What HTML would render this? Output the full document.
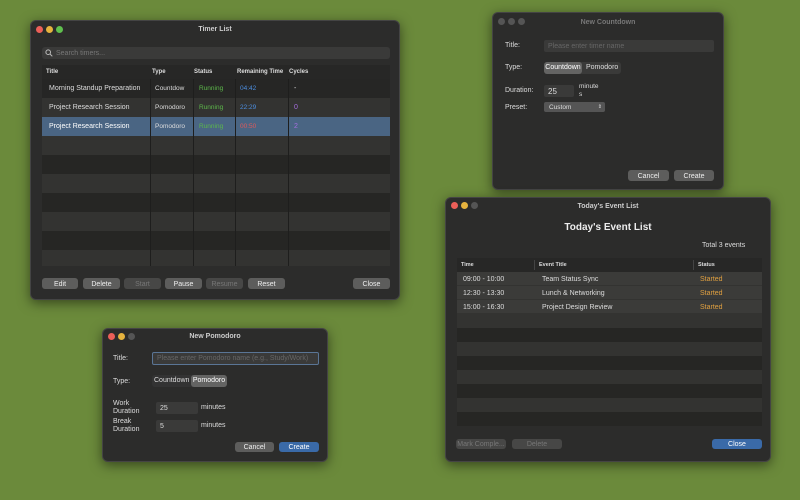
<!DOCTYPE html>
<html><head><meta charset="utf-8"><style>
*{box-sizing:border-box;margin:0;padding:0}
body{width:800px;height:500px;background:#6b8a3b;font-family:"Liberation Sans",sans-serif;color:#ddd;position:relative;overflow:hidden;font-size:7px}
.a{position:absolute}
.win{position:absolute;background:#2c2c2b;border-radius:6px;box-shadow:0 3px 12px rgba(0,0,0,.5);border:1px solid #444;overflow:hidden}
.tb{position:absolute;left:0;right:0;top:0;display:flex;align-items:center;justify-content:center;font-weight:bold;color:#ccc;font-size:7px;padding-top:1px}
.d{position:absolute;width:7px;height:7px;border-radius:50%}
.btn{position:absolute;background:#5d5d5c;border-radius:3px;color:#eee;display:flex;align-items:center;justify-content:center;font-size:7px;padding-top:1px}
.dis{background:#474746;color:#777}
.blue{background:#3a6aa8;color:#fff}
.fld{position:absolute;background:#3a3a39;border-radius:2px;color:#ddd;font-size:7px;padding-left:4px;display:flex;align-items:center}
.col{position:absolute;top:0;bottom:0;width:1px;background:#1e1e1d}
</style></head><body>

<!-- Timer List -->
<div class="win" style="left:30px;top:20px;width:370px;height:280px">
<div class="tb" style="height:16px">Timer List</div>
<div class="d" style="left:5px;top:5px;background:#ec5f58"></div>
<div class="d" style="left:15px;top:5px;background:#e6b33e"></div>
<div class="d" style="left:25px;top:5px;background:#5fc04e"></div>
<div class="a" style="left:11px;top:26px;width:348px;height:12px;background:#3a3a39;border-radius:3px;color:#777;line-height:13px;padding-left:14px">Search timers...</div>
<svg class="a" style="left:14px;top:28px" width="8" height="8"><circle cx="3.2" cy="3.2" r="2.3" stroke="#bbb" fill="none" stroke-width="1"/><path d="M5 5L7.3 7.3" stroke="#bbb" stroke-width="1"/></svg>
<div class="a" style="left:11px;top:44px;width:348px;height:201px;background:#333331">
 <div class="a" style="left:0;top:0;width:348px;height:14px;background:#272726"></div>
 <div class="a" style="left:0;top:14px;width:348px;height:19px;background:#262625"></div>
 <div class="a" style="left:0;top:52px;width:348px;height:19px;background:#4a6583"></div>
 <div class="a" style="left:0;top:90px;width:348px;height:19px;background:#262624"></div>
 <div class="a" style="left:0;top:128px;width:348px;height:19px;background:#262624"></div>
 <div class="a" style="left:0;top:166px;width:348px;height:19px;background:#262624"></div>
 <div class="col" style="left:108px;top:14px"></div><div class="col" style="left:151px;top:14px"></div><div class="col" style="left:193px;top:14px"></div><div class="col" style="left:246px;top:14px"></div>
 <div class="a" style="left:4px;top:4px;font-weight:bold;font-size:6px">Title</div>
 <div class="a" style="left:110px;top:4px;font-weight:bold;font-size:6px">Type</div>
 <div class="a" style="left:152px;top:4px;font-weight:bold;font-size:6px">Status</div>
 <div class="a" style="left:195px;top:4px;font-weight:bold;font-size:6px">Remaining Time</div>
 <div class="a" style="left:247px;top:4px;font-weight:bold;font-size:6px">Cycles</div>
 <div class="a" style="left:7px;top:20px">Morning Standup Preparation</div><div class="a" style="left:113px;top:20px;font-size:6.5px">Countdow</div><div class="a" style="left:157px;top:20px;color:#5cb84a;font-size:6.5px">Running</div><div class="a" style="left:198px;top:20px;color:#4c8ee0;font-size:6.5px">04:42</div><div class="a" style="left:252px;top:20px">-</div>
 <div class="a" style="left:7px;top:39px">Project Research Session</div><div class="a" style="left:113px;top:39px;font-size:6.5px">Pomodoro</div><div class="a" style="left:157px;top:39px;color:#5cb84a;font-size:6.5px">Running</div><div class="a" style="left:198px;top:39px;color:#4c8ee0;font-size:6.5px">22:29</div><div class="a" style="left:252px;top:39px;color:#a66ee0">0</div>
 <div class="a" style="left:7px;top:58px;color:#fff">Project Research Session</div><div class="a" style="left:113px;top:58px;font-size:6.5px">Pomodoro</div><div class="a" style="left:157px;top:58px;color:#5cb84a;font-size:6.5px">Running</div><div class="a" style="left:198px;top:58px;color:#e05a5a;font-size:6.5px">00:50</div><div class="a" style="left:252px;top:58px;color:#a66ee0">2</div>
</div>
<div class="btn" style="left:11px;top:257px;width:36px;height:11px">Edit</div>
<div class="btn" style="left:52px;top:257px;width:37px;height:11px">Delete</div>
<div class="btn dis" style="left:93px;top:257px;width:37px;height:11px">Start</div>
<div class="btn" style="left:134px;top:257px;width:37px;height:11px">Pause</div>
<div class="btn dis" style="left:175px;top:257px;width:37px;height:11px">Resume</div>
<div class="btn" style="left:217px;top:257px;width:37px;height:11px">Reset</div>
<div class="btn" style="left:322px;top:257px;width:37px;height:11px">Close</div>
</div>

<!-- New Countdown -->
<div class="win" style="left:492px;top:12px;width:232px;height:178px">
<div class="tb" style="height:18px;color:#777">New Countdown</div>
<div class="d" style="left:5px;top:5px;background:#555"></div><div class="d" style="left:15px;top:5px;background:#555"></div><div class="d" style="left:25px;top:5px;background:#555"></div>
<div class="a" style="left:12px;top:29px">Title:</div>
<div class="fld" style="left:51px;top:27px;width:170px;height:12px;color:#666">Please enter timer name</div>
<div class="a" style="left:12px;top:51px">Type:</div>
<div class="a" style="left:51px;top:49px;width:77px;height:12px;background:#3a3a39;border-radius:3px"></div>
<div class="a" style="left:51px;top:49px;width:38px;height:12px;background:#646463;border-radius:3px;line-height:12px;text-align:center;color:#fff">Countdown</div>
<div class="a" style="left:93px;top:51px">Pomodoro</div>
<div class="a" style="left:12px;top:74px">Duration:</div>
<div class="fld" style="left:51px;top:72px;width:30px;height:12px;font-size:8px">25</div>
<div class="a" style="left:86px;top:70px;font-size:6.5px;line-height:8px">minute<br>s</div>
<div class="a" style="left:12px;top:91px">Preset:</div>
<div class="fld" style="left:51px;top:89px;width:61px;height:10px;background:#555;font-size:6.5px;padding-left:5px">Custom<span style="position:absolute;right:3px;font-size:5px">⇕</span></div>
<div class="btn" style="left:135px;top:157px;width:41px;height:11px">Cancel</div>
<div class="btn" style="left:181px;top:157px;width:40px;height:11px">Create</div>
</div>

<!-- New Pomodoro -->
<div class="win" style="left:102px;top:328px;width:226px;height:134px">
<div class="tb" style="height:14px">New Pomodoro</div>
<div class="d" style="left:5px;top:4px;background:#ec5f58"></div><div class="d" style="left:15px;top:4px;background:#e6b33e"></div><div class="d" style="left:25px;top:4px;background:#555"></div>
<div class="a" style="left:10px;top:26px">Title:</div>
<div class="fld" style="left:49px;top:23px;width:167px;height:13px;color:#666;border:1px solid #5a7595">Please enter Pomodoro name (e.g., Study/Work)</div>
<div class="a" style="left:10px;top:49px">Type:</div>
<div class="a" style="left:49px;top:46px;width:75px;height:12px;background:#333;border-radius:3px"></div>
<div class="a" style="left:51px;top:48px">Countdown</div>
<div class="a" style="left:88px;top:46px;width:36px;height:12px;background:#646463;border-radius:3px;line-height:12px;text-align:center;color:#fff">Pomodoro</div>
<div class="a" style="left:10px;top:71px;line-height:8px">Work<br>Duration</div>
<div class="fld" style="left:53px;top:73px;width:42px;height:12px">25</div>
<div class="a" style="left:98px;top:75px">minutes</div>
<div class="a" style="left:10px;top:89px;line-height:8px">Break<br>Duration</div>
<div class="fld" style="left:53px;top:91px;width:42px;height:12px">5</div>
<div class="a" style="left:98px;top:93px">minutes</div>
<div class="btn" style="left:132px;top:113px;width:39px;height:10px">Cancel</div>
<div class="btn blue" style="left:176px;top:113px;width:40px;height:10px">Create</div>
</div>

<!-- Event List -->
<div class="win" style="left:445px;top:197px;width:326px;height:265px">
<div class="tb" style="height:15px">Today's Event List</div>
<div class="d" style="left:5px;top:4px;background:#ec5f58"></div><div class="d" style="left:15px;top:4px;background:#e6b33e"></div><div class="d" style="left:25px;top:4px;background:#555"></div>
<div class="a" style="left:0;right:0;top:24px;text-align:center;font-weight:bold;font-size:10px;color:#eee">Today's Event List</div>
<div class="a" style="left:256px;top:44px">Total 3 events</div>
<div class="a" style="left:11px;top:60px;width:305px;height:158px;background:#333331">
 <div class="a" style="left:0;top:0;width:305px;height:14px;background:#272726"></div>
 <div class="col" style="left:77px;top:2px;bottom:146px;background:#444"></div><div class="col" style="left:236px;top:2px;bottom:146px;background:#444"></div>
 <div class="a" style="left:4px;top:4px;font-weight:bold;font-size:5.5px">Time</div>
 <div class="a" style="left:82px;top:4px;font-weight:bold;font-size:5.5px">Event Title</div>
 <div class="a" style="left:241px;top:4px;font-weight:bold;font-size:5.5px">Status</div>
 <div class="a" style="left:0;top:14px;width:305px;height:13px;background:#3b3b39"></div>
 <div class="a" style="left:0;top:28px;width:305px;height:13px;background:#3b3b39"></div>
 <div class="a" style="left:0;top:42px;width:305px;height:13px;background:#3b3b39"></div>
 <div class="a" style="left:6px;top:18px">09:00 - 10:00</div><div class="a" style="left:85px;top:18px">Team Status Sync</div><div class="a" style="left:243px;top:18px;color:#e0a040">Started</div>
 <div class="a" style="left:6px;top:32px">12:30 - 13:30</div><div class="a" style="left:85px;top:32px">Lunch &amp; Networking</div><div class="a" style="left:243px;top:32px;color:#e0a040">Started</div>
 <div class="a" style="left:6px;top:46px">15:00 - 16:30</div><div class="a" style="left:85px;top:46px">Project Design Review</div><div class="a" style="left:243px;top:46px;color:#e0a040">Started</div>
 <div class="a" style="left:0;top:70px;width:305px;height:14px;background:#262624"></div>
 <div class="a" style="left:0;top:98px;width:305px;height:14px;background:#262624"></div>
 <div class="a" style="left:0;top:126px;width:305px;height:14px;background:#262624"></div>
 <div class="a" style="left:0;top:154px;width:305px;height:4px;background:#262624"></div>
</div>
<div class="a" style="left:11px;top:214px;width:305px;height:14px;background:#262624"></div>
<div class="btn dis" style="left:10px;top:241px;width:50px;height:10px">Mark Comple...</div>
<div class="btn dis" style="left:66px;top:241px;width:50px;height:10px">Delete</div>
<div class="btn blue" style="left:266px;top:241px;width:50px;height:10px">Close</div>
</div>
</body></html>
